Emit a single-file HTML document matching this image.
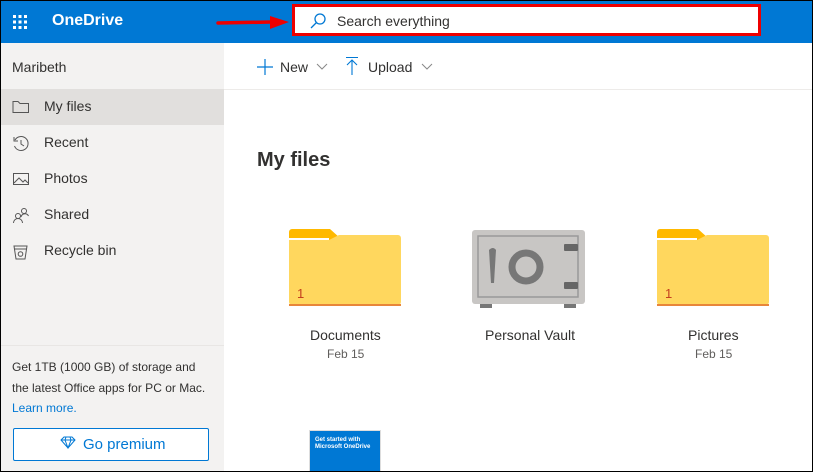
<!DOCTYPE html>
<html><head><style>
*{margin:0;padding:0;box-sizing:border-box}
body{width:813px;height:472px;overflow:hidden;font-family:"Liberation Sans",sans-serif;background:#000;position:relative}
#w{position:absolute;left:1px;top:1px;width:811px;height:470px;background:#fff;overflow:hidden}
#hdr{position:absolute;left:0;top:0;width:811px;height:42px;background:#0078d4}
.t{position:absolute;white-space:nowrap}
#side{position:absolute;left:0;top:42px;width:223px;height:428px;background:#f3f2f1}
.nav{position:absolute;left:0;width:223px;height:36px;font-size:14px;color:#323130}
.nav span{position:absolute;left:43px;top:9px}
.nav svg{position:absolute;left:11px;top:10px}
</style></head><body><div id="w">
<div id="hdr">
 <svg style="position:absolute;left:11px;top:13px" width="16" height="16"><g fill="#fff">
 <rect x="1" y="1" width="3" height="3"/><rect x="6.5" y="1" width="3" height="3"/><rect x="12" y="1" width="3" height="3"/>
 <rect x="1" y="6.5" width="3" height="3"/><rect x="6.5" y="6.5" width="3" height="3"/><rect x="12" y="6.5" width="3" height="3"/>
 <rect x="1" y="12" width="3" height="3"/><rect x="6.5" y="12" width="3" height="3"/><rect x="12" y="12" width="3" height="3"/></g></svg>
 <div class="t" style="left:51px;top:11px;color:#fff;font-size:16px;font-weight:bold">OneDrive</div>
 <svg style="position:absolute;left:215px;top:14px" width="75" height="16"><path d="M2 8 L55 7" stroke="#e00" stroke-width="3.5" stroke-linecap="round"/><path d="M54 1 L73 7 L54 14Z" fill="#e00"/></svg>
 <div style="position:absolute;left:291px;top:3px;width:469px;height:32px;background:#fff;border:3px solid #e00"></div>
 <svg style="position:absolute;left:308px;top:11px" width="18" height="18"><circle cx="11" cy="7" r="5" fill="none" stroke="#0078d4" stroke-width="1.3"/><path d="M7.5 10.5 L2 16" stroke="#0078d4" stroke-width="1.3"/></svg>
 <div class="t" style="left:336px;top:12px;font-size:14px;color:#323130">Search everything</div>
</div>
<div id="side">
 <div class="t" style="left:11px;top:16px;font-size:14px;color:#323130">Maribeth</div>
 <div class="nav" style="top:46px;background:#e1dfdd"><svg width="18" height="16"><path d="M1 2.5h5l2 2h8.5v9H1z" fill="none" stroke="#555" stroke-width="1"/></svg><span>My files</span></div>
 <div class="nav" style="top:82px"><svg width="18" height="18"><path d="M3 5 A7 7 0 1 1 2.5 11" fill="none" stroke="#555"/><path d="M2 2v4h4" fill="none" stroke="#555"/><path d="M9 5v4l3 2" fill="none" stroke="#555"/></svg><span>Recent</span></div>
 <div class="nav" style="top:118px"><svg width="18" height="16"><rect x="1.5" y="2.5" width="15" height="11" fill="none" stroke="#555"/><path d="M2 12l5-5 4 4 2-2 3 3" fill="none" stroke="#555"/></svg><span>Photos</span></div>
 <div class="nav" style="top:154px"><svg width="18" height="18"><circle cx="6" cy="9" r="2.5" fill="none" stroke="#555"/><path d="M1.5 16a4.5 4.5 0 0 1 9 0" fill="none" stroke="#555"/><circle cx="12" cy="4" r="2.5" fill="none" stroke="#555"/><path d="M9 10a4 4 0 0 1 7.5-1" fill="none" stroke="#555"/></svg><span>Shared</span></div>
 <div class="nav" style="top:190px"><svg width="18" height="18"><path d="M2 3h13l-2 13H4z" fill="none" stroke="#555"/><path d="M2 6h13" stroke="#555"/><circle cx="8.5" cy="11" r="2.3" fill="none" stroke="#555"/></svg><span>Recycle bin</span></div>
 <div style="position:absolute;left:0;top:302px;width:223px;height:1px;background:#e8e6e4"></div>
 <div class="t" style="left:11px;top:314px;font-size:12px;line-height:20.5px;color:#323130">Get 1TB (1000 GB) of storage and<br>the latest Office apps for PC or Mac.<br><span style="color:#0078d4">Learn more.</span></div>
 <div style="position:absolute;left:12px;top:385px;width:196px;height:33px;border:1px solid #0078d4;background:#fff;border-radius:2px"></div>
 <svg style="position:absolute;left:59px;top:392px" width="16" height="14"><path d="M4 2h8l3 3-7 8-7-8z M1 5h14 M6 2l-1 3 3 8 3-8-1-3" fill="none" stroke="#0078d4"/></svg>
 <div class="t" style="left:82px;top:393px;font-size:15px;color:#0078d4">Go premium</div>
</div>
<div style="position:absolute;left:223px;top:88px;width:588px;height:1px;background:#edebe9"></div>
<svg style="position:absolute;left:255px;top:57px" width="18" height="18"><path d="M9 1v16M1 9h16" stroke="#0078d4" stroke-width="1.2"/></svg>
<div class="t" style="left:279px;top:58px;font-size:14px;color:#323130">New</div>
<svg style="position:absolute;left:315px;top:62px" width="12" height="8"><path d="M1 1l5 5 5-5" fill="none" stroke="#888"/></svg>
<svg style="position:absolute;left:343px;top:55px" width="16" height="20"><path d="M2 1.5h12M8 4v15M3 9l5-5 5 5" fill="none" stroke="#0078d4" stroke-width="1.1"/></svg>
<div class="t" style="left:367px;top:58px;font-size:14px;color:#323130">Upload</div>
<svg style="position:absolute;left:420px;top:62px" width="12" height="8"><path d="M1 1l5 5 5-5" fill="none" stroke="#888"/></svg>
<div class="t" style="left:256px;top:148px;font-size:20px;font-weight:bold;color:#323130">My files</div>

<svg style="position:absolute;left:287px;top:227px" width="114" height="80"><path d="M1 4a3 3 0 0 1 3-3h38l10 9H110a3 3 0 0 1 3 3V60H1z" fill="#ffb900"/><path d="M1 12h40l10-5H110a3 3 0 0 1 3 3v64a3 3 0 0 1-3 3H4a3 3 0 0 1-3-3z" fill="#ffd75e"/><rect x="1" y="10" width="40" height="2" fill="#fff"/><path d="M1 76h112v2H1z" fill="#e8863a"/><text x="9" y="70" font-size="13" fill="#c4401e" font-family="Liberation Sans">1</text></svg>
<div class="t" style="left:309px;top:326px;font-size:14px;color:#323130">Documents</div>
<div class="t" style="left:326px;top:346px;font-size:12px;color:#605e5c">Feb 15</div>

<svg style="position:absolute;left:471px;top:229px" width="114" height="79"><rect x="0" y="0" width="113" height="74" rx="3" fill="#c8c6c4"/><rect x="6" y="6" width="100" height="61" fill="none" stroke="#999" stroke-width="1.5"/><path d="M17 20 q4-4 7 0 l-2 33 h-3z" fill="#777"/><circle cx="54" cy="37" r="14" fill="none" stroke="#777" stroke-width="7"/><rect x="92" y="14" width="14" height="7" rx="1" fill="#666"/><rect x="92" y="52" width="14" height="7" rx="1" fill="#666"/><rect x="8" y="74" width="12" height="4" fill="#777"/><rect x="92" y="74" width="12" height="4" fill="#777"/></svg>
<div class="t" style="left:484px;top:326px;font-size:14px;color:#323130">Personal Vault</div>

<svg style="position:absolute;left:655px;top:227px" width="114" height="80"><path d="M1 4a3 3 0 0 1 3-3h38l10 9H110a3 3 0 0 1 3 3V60H1z" fill="#ffb900"/><path d="M1 12h40l10-5H110a3 3 0 0 1 3 3v64a3 3 0 0 1-3 3H4a3 3 0 0 1-3-3z" fill="#ffd75e"/><rect x="1" y="10" width="40" height="2" fill="#fff"/><path d="M1 76h112v2H1z" fill="#e8863a"/><text x="9" y="70" font-size="13" fill="#c4401e" font-family="Liberation Sans">1</text></svg>
<div class="t" style="left:687px;top:326px;font-size:14px;color:#323130">Pictures</div>
<div class="t" style="left:694px;top:346px;font-size:12px;color:#605e5c">Feb 15</div>

<div style="position:absolute;left:308px;top:429px;width:72px;height:45px;background:#0078d4;border:1px solid #ddd"></div>
<div class="t" style="left:314px;top:436px;font-size:6px;line-height:7px;color:#fff;font-weight:bold">Get started with<br>Microsoft OneDrive</div>
</div></body></html>
